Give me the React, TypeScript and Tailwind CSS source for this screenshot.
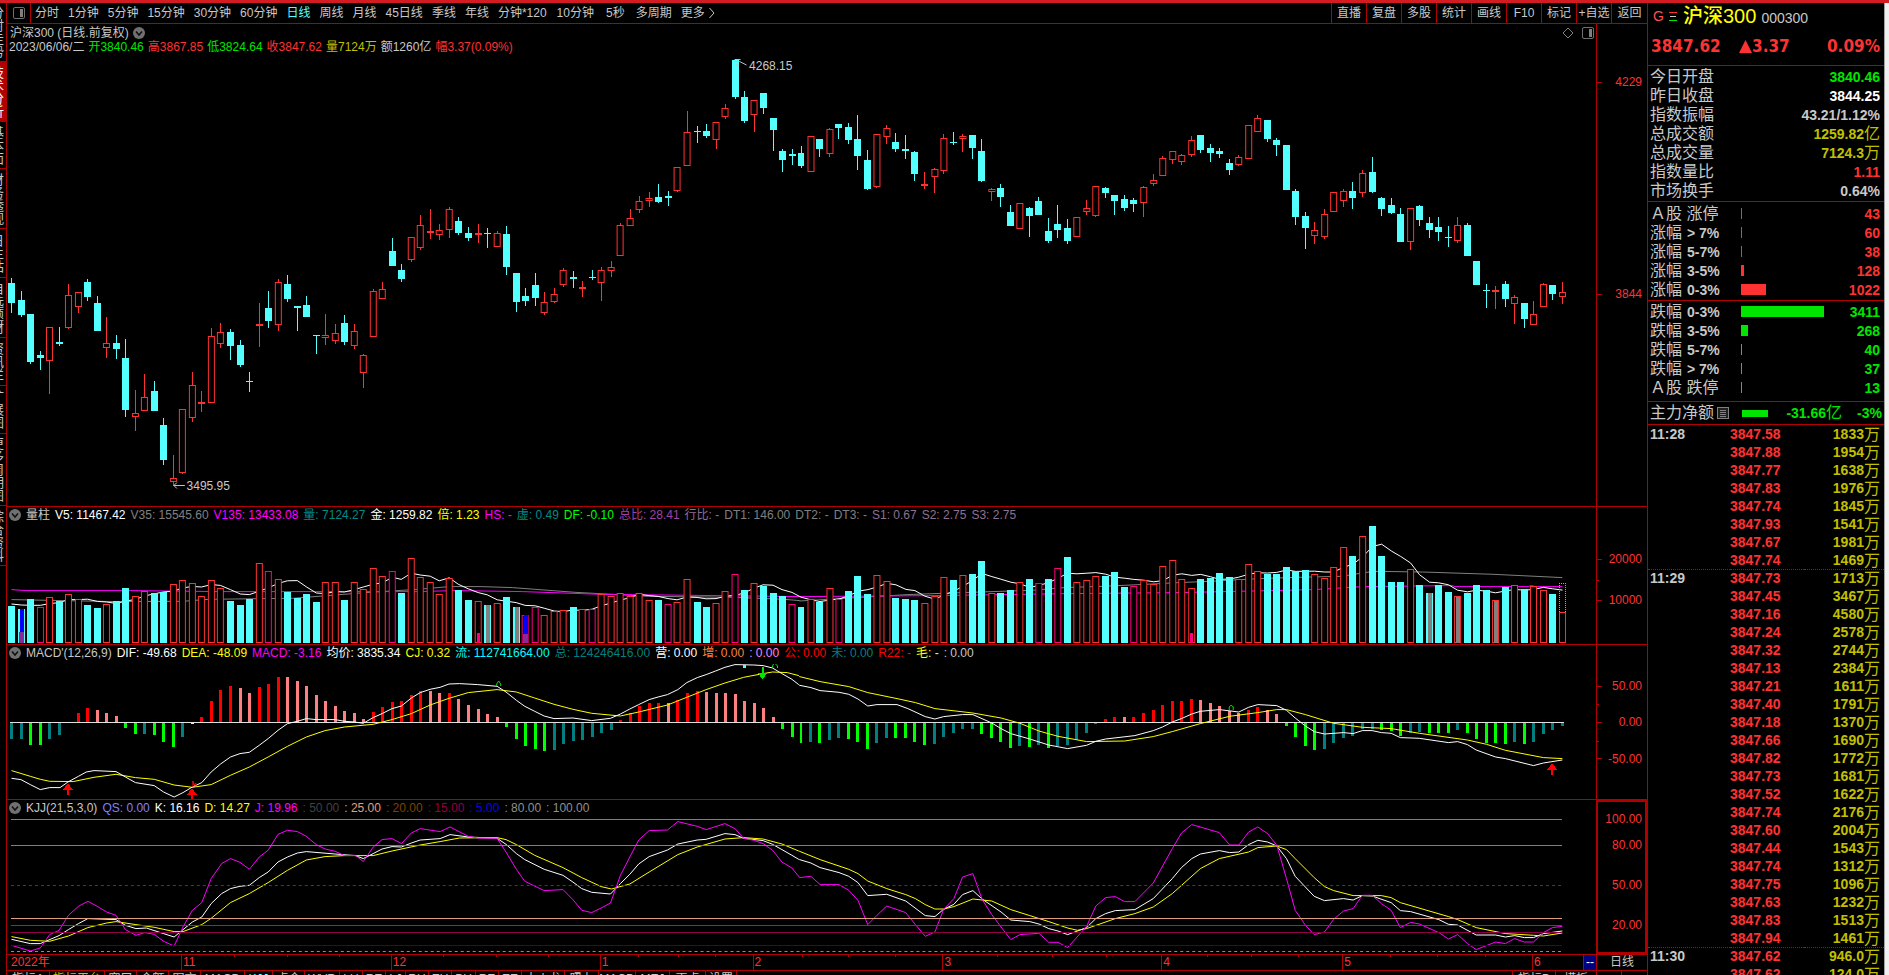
import React from "react";

const SANS = "font-['Liberation_Sans','Noto_Sans_CJK_SC',sans-serif]";
const BIG = "font-['DejaVu_Sans_Condensed','DejaVu_Sans','Noto_Sans_CJK_SC',sans-serif]";

const UP = "#ff3232";
const DOWN = "#54ffff";

const barX = (i: number) => Math.round(8 + 9.521 * i);

/* ---------- price data: direction, high, body top, body bottom, low ---------- */

type Candle = { up: boolean; hi: number; top: number; bot: number; lo: number };

const parseCandles = (text: string, base: number): Candle[] =>
  text
    .trim()
    .split(/\s+/)
    .map((item) => {
      const [hi, top, bot, lo] = item.slice(1).split(",").map((v) => Math.round(base + Number(v) / 3));
      return { up: item[0] === "u", hi, top, bot, lo };
    });

const candles: Candle[] = [
  ...parseCandles(
    `d714,729,789,819 d753,780,825,831 d822,822,966,972 d933,945,954,990 u861,861,963,1062 d861,906,912,918
     u732,765,864,867 u756,756,801,819 d717,726,771,783 d768,789,873,873 u831,909,924,954 d885,909,927,957
     d897,954,1110,1131 u1050,1119,1131,1173 u1002,1071,1113,1113 d1023,1053,1113,1113 d1134,1155,1260,1275
     u1245,1314,1326,1338 u1107,1107,1299,1302 u996,1035,1134,1146 u1053,1086,1092,1116 u864,888,1089,1089
     u849,876,912,924 d867,876,918,960 d900,915,975,981 d996,1023,1026,1056 u789,852,858,921 d753,804,843,864
     u717,726,855,873 d705,732,777,786 d798,798,804,873 d768,795,831,831 d885,885,888,942 u822,885,894,915
     u852,879,903,912 d825,849,906,915 u852,873,918,927 u942,945,999,1044 u747,753,891,891 u726,747,777,777
     d594,633,678,678 d672,690,717,726 u591,591,660,666 u525,555,624,630 u507,573,579,597 u552,570,585,600
     u501,507,570,594 d531,543,579,585 d561,579,594,603 u552,579,585,609
     d564,579,582,624 u573,579,621,621 d558,582,681,705 d699,699,786,816 d744,768,783,798 d699,735,774,798
     u756,786,819,825 u744,762,786,789 u684,690,735,741 d693,711,717,744 u723,741,747,771 d690,711,714,720
     u681,690,729,783 u663,681,693,711 u549,555,648,648 u507,534,558,558 u468,483,510,519 u456,474,483,501
     d432,471,486,489 d453,468,474,498 u381,381,453,456 u213,276,378,378 d258,273,276,309 d252,273,288,294
     u246,246,300,327 u192,204,231,237 d57,60,171,177 d153,171,243,249 u180,180,225,276 d159,159,204,222
     d234,234,270,333 d327,333,360,396 d327,342,348,375 d318,339,378,384 u288,288,396,396 d297,297,327,351
     u264,267,342,351 d252,252,264,297 d249,261,300,312 d225,297,348,390 d330,360,447,450 u282,282,441,444
     u255,264,291,312 d279,306,327,336 d285,327,333,357 d333,336,402,423 u396,432,438,447 u384,387,411,459
     u282,294,393,402 d276,306,309,315 u282,288,297,336 d285,285,324,357 d297,333,423,426 u444,447,456,483
     d432,444,471,501 d495,516,558,558 u489,489,567,567 d501,504,528,591 d471,483,525,525`,
    40
  ),
  ...parseCandles(
    `d384,423,453,459 d345,402,420,444 d387,414,453,462 u381,381,441,441 u330,354,366,375 u288,288,378,381
     d291,294,309,324 d315,315,333,375 d315,327,354,363 d324,330,342,366 u288,291,339,381 u252,270,282,288
     u198,204,258,258 u183,183,210,222 u192,195,216,225 u138,150,195,201 d135,135,180,189 d162,174,189,216
     d174,183,192,204 d207,219,240,255 u195,201,225,228 u105,105,207,207 u75,84,126,126 d90,90,147,156
     d144,150,165,198 d165,165,300,300 d297,303,381,405 d366,378,414,477 u396,420,438,462 u357,372,441,447
     u306,306,366,366 u297,303,333,351 d276,303,324,357 u240,249,309,321 d201,246,306,309 d321,324,357,378
     d324,345,369,372 d354,372,456,456 u354,354,456,480 d345,348,390,408 d381,399,420,444 d381,411,426,453
     d408,441,444,471 u381,405,453,459 d399,405,498,498 d513,513,585,585 d582,600,603,654 u588,600,606,657
     d573,582,627,651 u615,621,642,702 d639,639,687,714 u633,672,705,705 u579,582,651,651 d585,585,612,630
     u576,606,621,642`,
    90
  ),
];

/* ---------- volume: u hollow red, d cyan, m hollow pink, g/h grey core, b blue mark ---------- */

const volumeItems = `d333 b342 d312 m336 u306 d318 u297 u312 d330 d339 u327 d318 d279 u303 u288 d294 d291 u267 u255 u264
  u303 u255 u279 d318 d330 d312 u204 m228 u252 d291 d309 d297 d321 u261 u261 d315 u261 u282 u219 u243 m228 d294 u189
  u246 u261 u297 u249 d285 d315 p318 g330 u324 d306 g336 c360 m336 u360 u348 u345 d336 u342 m342 u297 u303 u294 u303
  u294 u315 d315 m327 u321 u252 d321 d336 u324 u288 m237 d285 u264 d273 d294 d303 m327 d336 u312 d321 u279 m312 d288
  d243 d297 u240 u258 d309 d312 d315 u324 u303 u246 d255 u240 d237 d198 u294 d294 d285 u261 d252 m264 d252 m219 d186
  u261 u255 u243 d243 d231 d276 m273 u255 u267 u213 u195 u252 p279 d252 d249 d234 d246 u252 u207 u228 d237 d237 d216
  d228 d225 u237 u249 u216 u156 d183 u123 d93 d183 d261 d261 u222 d270 g294 d270 d291 h303 d294 d270 d285 h315 d276
  u270 d282 u273 u285 d297 e351`
  .trim()
  .split(/\s+/)
  .map((s) => ({ kind: s[0], v: Number(s.slice(1)) }));

/* ---------- MACD histogram ---------- */

const macdItems = `T732 T732 G750 G750 T732 T720 N682 R654 R639 P645 P654 P663 G699 G717 T717 G720 G741 G756 T726 Y687 R666
  R618 R585 R573 P579 P594 R576 R567 R546 P546 P558 P573 P600 P618 P633 P648 P654 P672 R651 R636 R621 R618 R600 R588
  P588 P594 R594 P612 P630 P642 P657 P666 G696 G732 G753 G762 G768 T765 T747 T738 T735 T726 T714 T705 R675 R654 R633
  R624 R624 P624 R615 R594 R588 P591 P594 P594 P597 P618 P624 P639 P666 G702 G726 G744 T741 G744 T735 T729 G732 G741
  G762 T744 T729 G729 G729 G741 G750 T747 T726 T714 T702 T702 G717 G729 G741 G759 T753 G756 T750 G759 T753 T750 T735
  T714 T687 R672 R666 P666 R666 R654 R645 R630 R618 R618 R612 P615 P624 P633 P648 P654 R645 R636 P645 P657 G693 G726
  G753 G765 T762 T744 T729 T723 T702 T702 G705 G708 G723 T714 T711 G714 G714 G714 T705 G714 G732 G744 G744 G747 T741
  G747 T741 T717 T705 T693`
  .trim()
  .split(/\s+/)
  .map((s) => ({ kind: s[0], v: Number(s.slice(1)) }));

const macdColor: Record<string, string> = {
  T: "#008080",
  G: "#00ff00",
  R: "#ff0000",
  P: "#ff8080",
  Y: "#ffff00",
};

/* ---------- indicator curves, sampled in two halves ---------- */

const half = (text: string, x0: number, sx: number, y0: number) =>
  text
    .trim()
    .split(/\s+/)
    .map((p) => {
      const [x, y] = p.split(",").map(Number);
      return `${(x0 + x / sx).toFixed(1)},${(y0 + y / 3 + 0.3).toFixed(1)}`;
    })
    .join(" ");

const curve = (left: string, right: string, y0: number) =>
  `${half(left, 0, 1.912, y0)} ${half(right, 800, 1.8447, y0)}`;

const v135 = curve(
  "22,283 50,286 250,286 420,289 800,289 870,286 1000,289 1150,297 1320,300 1530,304",
  "0,304 250,301 500,295 700,292 870,286 950,283 1040,274 1205,271 1210,274 1345,274 1350,271 1360,274 1408,274",
  495
);
const v35 = curve(
  "22,313 220,319 350,318 400,312 560,309 700,292 800,282 860,274 920,274 980,277 1100,291 1240,303 1400,306 1500,312 1530,316",
  "0,317 200,298 300,292 430,285 490,277 560,273 640,267 700,262 760,258 850,250 920,246 1000,243 1060,228 1150,230 1280,237 1408,247",
  495
);
const v5 = volumeItems
  .map((_, i) => {
    const from = Math.max(0, i - 4);
    const part = volumeItems.slice(from, i + 1);
    const avg = i < 4 ? [327, 330, 331, 331][i] : part.reduce((a, b) => a + (b.kind === "e" ? 290 : b.v), 0) / part.length;
    return `${barX(i) + 3.5},${(495 + avg / 3).toFixed(1)}`;
  })
  .join(" ");

const dif = curve(
  `22,849 40,853 58,868 77,883 95,877 115,877 130,860 150,843 165,830 180,826 222,829 240,845 259,862 295,871 313,890
   333,905 350,892 368,875 386,862 404,830 422,806 441,785 459,775 477,771 496,750 513,730 532,705 550,685 569,678
   586,670 605,673 641,673 659,678 678,680 695,684 714,667 731,655 750,640 768,632 787,608 804,592 823,582 842,576
   859,566 879,565 914,568 951,573 968,590 988,615 1004,633 1023,648 1041,662 1060,670 1096,668 1132,676 1168,669
   1187,656 1205,641 1222,628 1242,613 1259,605 1277,598 1297,583 1314,562 1334,547 1351,538 1369,527 1387,516
   1406,508 1442,509 1460,511 1478,518 1496,535 1515,552 1528,568`,
  `0,570 21,577 38,586 73,591 91,597 108,611 126,632 143,628 180,628 200,640 232,664 250,671 266,664 301,658 320,658
   355,683 372,700 390,715 425,731 460,749 495,760 530,750 547,738 565,731 619,721 653,706 670,695 688,680 705,670
   724,656 740,648 775,643 811,650 829,636 846,628 881,631 899,645 915,668 934,692 950,709 969,716 1004,712 1022,715
   1039,706 1057,706 1074,712 1092,714 1109,727 1144,729 1198,742 1215,739 1233,748 1249,764 1285,785 1303,790
   1355,811 1373,803 1408,794`,
  495
);
const dea = curve(
  `22,826 58,843 77,852 95,858 140,859 180,846 222,837 259,847 295,852 333,869 368,876 404,868 441,840 477,815 513,785
   550,753 586,725 622,706 659,695 714,687 750,673 787,655 823,629 859,609 896,592 951,583 988,590 1023,608 1060,627
   1096,642 1132,654 1187,662 1222,650 1277,629 1314,606 1351,583 1387,563 1423,546 1460,535 1478,530 1506,532 1528,541`,
  `0,544 38,559 91,574 126,592 180,610 214,622 250,640 320,653 372,668 407,684 442,707 477,723 530,739 600,737 653,724
   688,709 740,685 794,663 846,652 881,643 899,643 934,658 986,684 1039,696 1092,700 1144,714 1233,734 1268,747
   1303,765 1373,787 1408,790`,
  495
);
const kLine = curve(
  `22,432 58,445 77,445 113,421 131,403 150,385 168,370 222,373 240,390 260,400 280,398 313,415 333,425 368,380 386,365
   404,325 424,295 441,280 459,273 477,270 496,247 513,230 532,200 550,185 569,173 586,169 641,176 680,181 695,190
   714,175 731,161 750,154 768,155 787,143 804,134 842,130 861,118 896,125 951,129 968,147 988,175 1004,193 1041,222
   1077,240 1096,260 1113,280 1132,291 1168,296 1187,265 1205,237 1222,206 1242,184 1277,164 1297,146 1334,134
   1351,132 1387,115 1406,118 1423,129 1460,136 1478,147 1496,163 1515,180 1528,192`,
  `0,193 21,203 38,217 73,232 91,243 108,262 126,301 161,297 196,317 232,361 250,364 266,342 285,327 301,298 320,286
   337,311 372,350 390,374 425,379 442,386 460,400 477,407 495,418 530,397 547,370 565,355 583,346 619,343 653,310
   688,250 705,217 724,190 740,176 775,166 794,172 811,170 829,148 846,135 864,140 881,152 899,190 915,243 950,303
   969,316 1004,310 1022,314 1039,301 1057,302 1092,322 1109,346 1128,349 1180,373 1198,387 1215,389 1249,419
   1285,419 1303,425 1320,421 1338,427 1355,427 1373,415 1408,407`,
  795
);
const dLine = curve(
  `22,424 58,435 95,438 131,422 168,397 204,383 222,379 260,388 295,396 333,409 350,409 386,388 404,369 441,322 477,295
   513,262 550,225 586,194 622,184 659,181 714,181 750,167 804,149 842,139 879,128 951,127 968,133 988,148 1023,180
   1077,217 1113,247 1150,274 1170,281 1205,266 1242,230 1297,178 1334,155 1387,131 1423,127 1460,131 1496,146
   1528,167`,
  `0,168 38,193 91,222 108,235 126,257 161,280 196,298 214,310 232,328 250,341 266,341 285,334 320,311 355,317 390,343
   425,361 460,379 495,398 513,405 530,400 583,370 619,355 653,335 688,295 740,220 775,190 829,170 846,157 881,152
   899,163 915,190 950,247 969,274 986,286 1022,301 1074,301 1092,307 1109,322 1198,364 1215,373 1249,397 1303,415
   1355,420 1373,422 1408,413`,
  795
);
const jLine = curve(
  `22,450 58,467 77,458 95,418 113,405 131,360 150,333 168,318 186,333 204,350 222,360 240,403 260,420 277,412 295,417
   313,438 333,452 350,395 368,345 386,322 404,250 424,205 441,190 459,201 477,222 496,185 513,165 532,117 550,105
   569,109 586,123 605,148 622,161 641,168 659,181 680,180 695,199 714,155 731,133 750,130 768,145 787,113 804,100
   842,109 861,95 896,123 914,128 951,129 968,170 988,222 1004,258 1041,286 1077,283 1096,313 1113,345 1132,352
   1150,338 1168,323 1187,240 1205,185 1222,134 1242,106 1277,104 1297,79 1334,93 1351,103 1387,85 1406,100 1423,129
   1442,135 1460,145 1478,165 1496,200 1515,218 1528,243`,
  `0,247 21,243 38,268 73,268 91,285 108,315 126,388 143,360 161,332 196,352 214,388 232,423 250,410 266,342 285,310
   301,245 320,235 337,312 355,358 372,395 390,433 407,418 442,414 460,441 477,441 495,457 530,393 547,332 565,307
   583,304 600,319 619,319 653,263 688,160 705,113 724,88 740,95 775,112 794,149 811,149 829,110 846,95 864,115
   881,150 899,250 915,345 934,390 950,418 969,410 986,372 1004,347 1022,340 1039,300 1057,300 1074,325 1092,345
   1109,397 1128,381 1144,386 1180,412 1198,431 1215,418 1233,445 1249,463 1285,440 1303,445 1320,430 1338,440
   1355,440 1373,412 1390,397 1408,393`,
  795
);

/* ---------- small drawings ---------- */

const ChevronDot = () => (
  <svg className="size-3 shrink-0" viewBox="0 0 12 12" aria-hidden="true">
    <circle cx="6" cy="6" r="6" fill="#707070" />
    <path d="M3 4.5 6 8l3-3.5" fill="none" stroke="#101010" strokeWidth="1.5" />
  </svg>
);

const PanelIcon = () => (
  <svg className="size-3 shrink-0" viewBox="0 0 12 12" aria-hidden="true">
    <rect x="0.5" y="0.5" width="11" height="11" rx="1.5" fill="none" stroke="#707070" />
    <rect x="7" y="2" width="3" height="8" fill="#808080" />
  </svg>
);

const Arrow = ({ x, y, down }: { x: number; y: number; down?: boolean }) => (
  <path
    fill={down ? "#00e600" : "#ff0000"}
    d={
      down
        ? `M${x - 1} ${y - 12}h2v6h4l-5 6l-5 -6h4z`
        : `M${x} ${y}l5 7h-4v5h-2v-5h-4z`
    }
  />
);

const Frame = ({ box, label, children }: { box: string; label: string; children: React.ReactNode }) => (
  <svg
    className="absolute inset-0 size-full"
    viewBox={box}
    preserveAspectRatio="none"
    shapeRendering="crispEdges"
    role="img"
    aria-label={label}
  >
    {children}
  </svg>
);

/* ---------- chart panes ---------- */

const PriceChart = () => (
  <Frame box="7 54 1590 452" label="沪深300 日线">
    {candles.map((c, i) => {
      const x = barX(i);
      const color = c.up ? UP : DOWN;
      const h = Math.max(1, c.bot - c.top);
      return (
        <g key={i} fill={color}>
          {c.top > c.hi && <rect x={x + 3} y={c.hi} width="1" height={c.top - c.hi} />}
          {c.lo > c.bot && <rect x={x + 3} y={c.bot} width="1" height={c.lo - c.bot} />}
          {c.up && h > 2 ? (
            <rect x={x + 0.5} y={c.top + 0.5} width="6" height={h - 1} fill="none" stroke={color} />
          ) : (
            <rect x={x} y={c.top} width="7" height={h} />
          )}
        </g>
      );
    })}
    <g stroke="#c0c0c0" fill="none">
      <path d="M735 61.500h5l7 3.500M735 59.500h6M737 64l2 3" />
      <path d="M174 485.500h11M174 485.500l3 -3M174 485.500l3 3" />
    </g>
  </Frame>
);

const VOL_BASE = 643;

const VolumeChart = () => (
  <Frame box="7 523 1590 121" label="成交量">
    <polyline points={v35} fill="none" stroke="#808080" />
    <polyline points={v135} fill="none" stroke="#ff00ff" />
    <polyline points={v5} fill="none" stroke="#ffffff" />
    {volumeItems.map(({ kind, v }, i) => {
      const x = barX(i);
      const y = Math.round(495 + v / 3);
      const h = VOL_BASE - y;
      if (kind === "d") return <rect key={i} x={x} y={y} width="7" height={h} fill={DOWN} />;
      if (kind === "g")
        return (
          <g key={i}>
            <rect x={x} y={y} width="7" height={h} fill={DOWN} />
            <rect x={x + 2} y={y} width="4" height={h} fill="#808080" />
          </g>
        );
      if (kind === "b")
        return (
          <g key={i}>
            <rect x={x} y={y} width="7" height={h} fill={DOWN} />
            <rect x={x + 2} y={y} width="4" height={h} fill="#0000ff" />
            <rect x={x + 1} y="632" width="5" height="11" fill="#8a2a9a" />
          </g>
        );
      return (
        <g key={i}>
          <rect
            x={x + 0.5}
            y={y + 0.5}
            width="6"
            height={h - 1}
            fill="#000000"
            stroke={kind === "m" || kind === "c" ? "#ff0080" : UP}
          />
          {kind === "h" && <rect x={x + 2} y={y + 1} width="4" height={h - 1} fill="#808080" />}
          {kind === "p" && <rect x={x + 2} y="633" width="3" height="10" fill="#ff0080" />}
          {kind === "c" && (
            <>
              <rect x={x + 2} y={y} width="4" height={h} fill="#0000ff" />
              <rect x={x + 1} y="634" width="5" height="9" fill="#8a2a9a" />
            </>
          )}
          {kind === "e" && (
            <path
              d={`M${x + 0.5} 583v29M${x + 6.5} 583v29M${x} 583.5h7`}
              stroke="#c0c000"
              strokeDasharray="1 1"
              fill="none"
            />
          )}
        </g>
      );
    })}
  </Frame>
);

const MacdChart = () => (
  <Frame box="7 661 1590 138" label="MACD">
    {macdItems.map(({ kind, v }, i) => {
      if (kind === "N") return null;
      const y = Math.round(495 + v / 3);
      const top = Math.min(y, 722);
      return (
        <rect key={i} x={barX(i) + 2} y={top} width="3" height={Math.max(1, Math.abs(y - 722))} fill={macdColor[kind]} />
      );
    })}
    <rect x="10" y="722" width="1555" height="1" fill="#e0e0e0" />
    <polyline points={dea} fill="none" stroke="#ffff00" />
    <polyline points={dif} fill="none" stroke="#ffffff" />
    <Arrow x={68} y={783} />
    <Arrow x={192} y={788} />
    <Arrow x={1553} y={763} />
    <Arrow x={763} y={679} down />
    <g fill="none" stroke="#00e600">
      <path d="M497 686v-2l2 -3l2 3v2" />
      <path d="M773 668v-2l1 -2M776 664l2 2v2" />
      <path d="M1230 710v-3l2 -2l2 2v3" />
    </g>
    <path d="M193 787v-6l1 4l2 -2v3" fill="none" stroke="#ff0000" />
    <rect x="743" y="665" width="3" height="3" fill={DOWN} />
  </Frame>
);

const kjjLevels = [
  { y: 819, color: "#808080" },
  { y: 845, color: "#808080" },
  { y: 885, color: "#404040", dash: "3 3" },
  { y: 918, color: "#e0a080" },
  { y: 925, color: "#804000" },
  { y: 932, color: "#900048" },
  { y: 945, color: "#0000ff" },
  { y: 951, color: "#8080ff", dash: "3 3" },
];

const KjjChart = () => (
  <Frame box="7 816 1590 138" label="KJJ">
    <polyline points={kLine} fill="none" stroke="#ffffff" />
    <polyline points={dLine} fill="none" stroke="#ffff00" />
    <polyline points={jLine} fill="none" stroke="#ff00ff" />
    {kjjLevels.map((l) => (
      <line key={l.y} x1="11" x2="1563" y1={l.y + 0.5} y2={l.y + 0.5} stroke={l.color} strokeDasharray={l.dash} />
    ))}
  </Frame>
);

/* ---------- pane header ---------- */

type Field = [string, string];

const Readout = ({ title, fields }: { title: string; fields: Field[] }) => (
  <header className="flex h-4 shrink-0 items-center gap-[5px] pl-[2px] text-[12px] leading-4 whitespace-nowrap">
    <button type="button" aria-label={`${title} 菜单`}>
      <ChevronDot />
    </button>
    <h2 className="text-[#c8c8c8]">{title}</h2>
    {fields.map(([text, color], i) => (
      <span key={i} className={color}>
        {text}
      </span>
    ))}
  </header>
);

const volumeFields: Field[] = [
  ["V5: 11467.42", "text-white"],
  ["V35: 15545.60", "text-[#808080]"],
  ["V135: 13433.08", "text-[#ff00ff]"],
  ["量: 7124.27", "text-[#008a8a]"],
  ["金: 1259.82", "text-white"],
  ["倍: 1.23", "text-[#ffff00]"],
  ["HS: -", "text-[#ff00ff]"],
  ["虚: 0.49", "text-[#008a8a]"],
  ["DF: -0.10", "text-[#00ff00]"],
  ["总比: 28.41", "text-[#a040a8]"],
  ["行比: -", "text-[#907090]"],
  ["DT1: 146.00", "text-[#808080]"],
  ["DT2: -", "text-[#808080]"],
  ["DT3: -", "text-[#808080]"],
  ["S1: 0.67", "text-[#907090]"],
  ["S2: 2.75", "text-[#907090]"],
  ["S3: 2.75", "text-[#907090]"],
];

const macdFields: Field[] = [
  ["DIF: -49.68", "text-white"],
  ["DEA: -48.09", "text-[#ffff00]"],
  ["MACD: -3.16", "text-[#ff00ff]"],
  ["均价: 3835.34", "text-white"],
  ["CJ: 0.32", "text-[#ffff00]"],
  ["流: 112741664.00", "text-[#00ffff]"],
  ["总: 124246416.00", "text-[#008080]"],
  ["营: 0.00", "text-white"],
  ["增: 0.00", "text-[#ff8040]"],
  [": 0.00", "text-[#ff80ff]"],
  ["公: 0.00", "text-[#ff0000]"],
  ["未: 0.00", "text-[#008080]"],
  ["R22: -", "text-[#ff0000]"],
  ["毛: -", "text-[#ffff00]"],
  [": 0.00", "text-[#c8c8c8]"],
];

const kjjFields: Field[] = [
  ["QS: 0.00", "text-[#8080ff]"],
  ["K: 16.16", "text-white"],
  ["D: 14.27", "text-[#ffff00]"],
  ["J: 19.96", "text-[#ff00ff]"],
  [": 50.00", "text-[#404040]"],
  [": 25.00", "text-[#e0a080]"],
  [": 20.00", "text-[#804000]"],
  [": 15.00", "text-[#900048]"],
  [": 5.00", "text-[#0000ff]"],
  [": 80.00", "text-[#909090]"],
  [": 100.00", "text-[#909090]"],
];

/* ---------- value axis ---------- */

type Mark = { at: number; text?: string };

const ValueAxis = ({ from, to, marks, boxed }: { from: number; to: number; marks: Mark[]; boxed?: boolean }) => (
  <div
    className={
      boxed
        ? "relative w-[52px] shrink-0 border-2 border-r-[3px] border-[#b00000]"
        : "relative w-[52px] shrink-0 border-x border-[#b00000]"
    }
  >
    {marks.map((m) => (
      <div
        key={m.at}
        className={`absolute inset-x-0 flex h-4 -translate-y-1/2 items-center justify-between ${boxed ? "pr-[3px]" : "pr-[5px]"}`}
        style={{ top: `${((m.at - from) / (to - from)) * 100}%` }}
      >
        <span className={boxed ? "w-0" : m.text ? "h-px w-[5px] bg-[#b00000]" : "h-px w-[2px] bg-[#b00000]"} />
        <span className="text-[12px] leading-4 text-[#ff3232]">{m.text}</span>
      </div>
    ))}
  </div>
);

/* ---------- time axis ---------- */

const months: [number, string][] = [
  [181, "11"],
  [391, "12"],
  [600, "1"],
  [753, "2"],
  [943, "3"],
  [1162, "4"],
  [1343, "5"],
  [1533, "6"],
];
const weekTicks = [234, 287, 339, 443, 496, 548, 638, 678, 715, 802, 849, 896, 998, 1053, 1107, 1208, 1252, 1299, 1391, 1438, 1486];
const pctX = (x: number) => `${((x - 7) / 1590) * 100}%`;

const TimeAxis = () => (
  <footer className="flex h-4 shrink-0 border-b border-[#b00000] text-[12px] leading-[15px]">
    <div className="relative min-w-0 flex-1 text-[#ff3232]">
      <span className="pl-1">2022年</span>
      {weekTicks.map((x) => (
        <span key={x} className="absolute top-0 h-[2px] w-px bg-[#b00000]" style={{ left: pctX(x) }} />
      ))}
      {months.map(([x, t]) => (
        <span
          key={x}
          className="absolute inset-y-0 border-l border-[#b00000] pl-px"
          style={{ left: pctX(x) }}
        >
          {t}
        </span>
      ))}
      <span className="absolute inset-y-0 right-0 w-[13px] border-l border-[#b00000] bg-[#000080] text-center text-white">
        --
      </span>
    </div>
    <button type="button" className="w-[52px] shrink-0 border-x border-[#b00000] text-center text-[#c8c8c8]">
      日线
    </button>
  </footer>
);

/* ---------- bars around the charts ---------- */

const periods: [string, string][] = [
  ["分时", ""], ["1分钟", ""], ["5分钟", ""], ["15分钟", ""], ["30分钟", ""], ["60分钟", ""],
  ["日线", "text-[#54ffff]"], ["周线", ""], ["月线", ""], ["45日线", ""], ["季线", ""], ["年线", ""],
  ["分钟*120", ""], ["10分钟", "px-px"], ["5秒", "px-[2px]"], ["多周期", ""],
];
const tools = ["直播", "复盘", "多股", "统计", "画线", "F10", "标记", "+自选"];

const Toolbar = () => (
  <nav className="flex h-[21px] shrink-0 items-stretch border-r border-b border-[#b00000] text-[12px] text-[#c8c8c8]">
    <button type="button" aria-label="侧栏" className="flex w-[24px] items-center justify-center border-r border-[#b00000]">
      <PanelIcon />
    </button>
    <div className="flex flex-1 items-center gap-[9px] pl-1 whitespace-nowrap">
      {periods.map(([p, cls]) => (
        <button type="button" key={p} className={cls}>
          {p}
        </button>
      ))}
      <button type="button" className="flex items-center gap-1">
        更多
        <svg className="h-3 w-[6px]" viewBox="0 0 6 12" aria-hidden="true">
          <path d="M0.500 1 5 6 0.500 11" fill="none" stroke="#c8c8c8" />
        </svg>
      </button>
    </div>
    {tools.map((t) => (
      <button type="button" key={t} className="w-[35px] border-l border-[#b00000] text-center whitespace-nowrap">
        {t}
      </button>
    ))}
    <button type="button" className="w-[36px] border-l border-[#b00000] text-center">
      返回
    </button>
  </nav>
);

const sideTabs: [string, string][] = [
  ["分时走势", "h-[58px] text-[#c8c8c8]"],
  ["技术分析", "h-[61px] bg-[#b00000] text-white"],
  ["基本面", "h-[47px] border-b border-[#b00000] text-[#c8c8c8]"],
  ["财务透视", "h-[60px] border-b border-[#b00000] text-[#c8c8c8]"],
  ["日主站", "h-[49px] border-b border-[#b00000] text-[#c8c8c8]"],
  ["自选题材", "h-[60px] border-b border-[#b00000] text-[#c8c8c8]"],
  ["资讯栏", "h-[48px] border-b border-[#b00000] text-[#c8c8c8]"],
  ["扩展图", "h-[48px] border-b border-[#b00000] text-[#c8c8c8]"],
  ["更多周期图", "h-[72px] border-b border-[#b00000] text-[#c8c8c8]"],
  ["综合资料", "h-[60px] border-b border-[#b00000] text-[#c8c8c8]"],
];

const SideTabs = () => (
  <nav className="flex w-[7px] shrink-0 flex-col border-r border-[#b00000]">
    {sideTabs.map(([t, cls]) => (
      <button
        type="button"
        key={t}
        className={`shrink-0 overflow-hidden pr-[3px] text-[13px] leading-[14px] whitespace-nowrap [writing-mode:vertical-rl] ${cls}`}
      >
        {t}
      </button>
    ))}
  </nav>
);

const templates: [string, string][] = [
  ["指标A", "w-[43px]"], ["指标平台", "w-[55px] text-[#c0c000]"], ["窗口", "w-[32px]"], ["金额", "w-[32px]"],
  ["图文", "w-[32px]"], ["MACD", "w-[44px]"], ["KJJ", "w-[28px] text-[#54ffff]"], ["点金", "w-[32px]"],
  ["WVR", "w-[35px]"], ["LU", "w-[23px]"], ["RE", "w-[23px]"], ["LJ", "w-[20px]"], ["RU", "w-[23px]"],
  ["EU", "w-[23px]"], ["BU", "w-[24px]"], ["RE", "w-[23px]"], ["EE", "w-[23px]"], ["大火龙", "w-[43px]"],
  ["照力", "w-[34px]"], ["MACD", "w-[37px]"], ["MEJ", "w-[34px]"], ["更点", "w-[36px]"], ["设置", "w-[31px]"],
];

const TemplateBar = () => (
  <nav className="flex h-1 shrink-0 overflow-hidden text-[12px] leading-4 text-[#c8c8c8]">
    {templates.map(([t, cls], i) => (
      <button
        type="button"
        key={i}
        className={`h-4 shrink-0 overflow-hidden border-r border-[#b00000] text-center whitespace-nowrap ${cls}`}
      >
        {t}
      </button>
    ))}
    <span className="flex-1" />
    <button type="button" className="h-4 w-[43px] border-l border-[#b00000]">指标B</button>
    <button type="button" className="h-4 w-[41px] border-l border-[#b00000]">模板</button>
    <button type="button" className="h-4 w-[25px] border-l border-[#b00000]">+</button>
    <button type="button" className="h-4 w-[27px] border-x border-[#b00000]">-</button>
  </nav>
);

/* ---------- quote panel ---------- */

const RED = "text-[#ff3232]";
const GREEN = "text-[#00e600]";
const YELLOW = "text-[#c0c000]";
const GREY = "text-[#c8c8c8]";

const stats: [string, string, string, string][] = [
  ["今日开盘", "3840.46", "", GREEN],
  ["昨日收盘", "3844.25", "", "text-white"],
  ["指数振幅", "43.21/1.12%", "", GREY],
  ["总成交额", "1259.82", "亿", YELLOW],
  ["总成交量", "7124.3", "万", YELLOW],
  ["指数量比", "1.11", "", RED],
  ["市场换手", "0.64%", "", GREY],
];

const rising: [string, string, number][] = [
  ["Ａ股 涨停", "", 43],
  ["涨幅", "> 7%", 60],
  ["涨幅", "5-7%", 38],
  ["涨幅", "3-5%", 128],
  ["涨幅", "0-3%", 1022],
];
const falling: [string, string, number][] = [
  ["跌幅", "0-3%", 3411],
  ["跌幅", "3-5%", 268],
  ["跌幅", "5-7%", 40],
  ["跌幅", "> 7%", 37],
  ["Ａ股 跌停", "", 13],
];

const CJK = "text-[16px] font-normal";

type BreadthProps = { rows: [string, string, number][]; text: string; fill: string; pad: string };

const Breadth = ({ rows, text, fill, pad }: BreadthProps) => (
  <dl className={`border-b border-[#b00000] pl-[2px] ${pad}`}>
    {rows.map(([label, range, count]) => (
      <div key={label + range} className="flex h-[19px] items-center pr-1">
        <dt className={`flex w-[91px] shrink-0 items-center gap-[5px] whitespace-nowrap ${GREY}`}>
          <span className={CJK}>{label}</span>
          {range && <span className="font-bold">{range}</span>}
        </dt>
        <dd className="flex flex-1 items-center justify-between">
          <span className={`h-[11px] ${fill}`} style={{ width: Math.max(1, Math.round((count / 3411) * 83)) }} />
          <span className={`font-bold ${text}`}>{count}</span>
        </dd>
      </div>
    ))}
  </dl>
);

const trades: [string, string, string][] = [
  ["11:28", "58", "1833"], ["", "88", "1954"], ["", "77", "1638"], ["", "83", "1976"], ["", "74", "1845"],
  ["", "93", "1541"], ["", "67", "1981"], ["", "74", "1469"],
  ["11:29", "73", "1713"], ["", "45", "3467"], ["", "16", "4580"], ["", "24", "2578"], ["", "32", "2744"],
  ["", "13", "2384"], ["", "21", "1611"], ["", "40", "1791"], ["", "18", "1370"], ["", "66", "1690"],
  ["", "82", "1772"], ["", "73", "1681"], ["", "52", "1622"], ["", "74", "2176"], ["", "60", "2004"],
  ["", "44", "1543"], ["", "74", "1312"], ["", "75", "1096"], ["", "63", "1232"], ["", "83", "1513"],
  ["", "94", "1461"],
  ["11:30", "62", "946.0"], ["", "62", "124.0"],
];

const QuotePanel = () => (
  <aside className="flex w-[236px] shrink-0 flex-col overflow-hidden text-[14px] leading-[18px]">
    <header className="h-[63px] shrink-0 border-b border-[#b00000] pl-[3px]">
      <div className="flex h-[26px] items-center whitespace-nowrap">
        <span className="w-[18px] pl-[2px] text-[14px] text-[#ff5050]">G</span>
        <svg className="mr-[6px] h-[11px] w-[8px]" viewBox="0 0 8 11" shapeRendering="crispEdges" aria-hidden="true">
          <path d="M0 1.500h8" stroke="#ff3232" />
          <path d="M1 5.500h6" stroke="#c8c8c8" />
          <path d="M0 9.500h8" stroke="#00e600" />
        </svg>
        <h1 className="text-[20px] font-medium text-[#ffff00]">沪深300</h1>
        <span className={`pt-1 pl-[5px] text-[14px] ${GREY}`}>000300</span>
      </div>
      <div className={`flex h-[34px] items-center justify-between pr-1 text-[17px] font-bold ${BIG} ${RED}`}>
        <span className="w-[88px]">3847.62</span>
        <span className="flex flex-1 items-center">
          <svg className="size-[13px]" viewBox="0 0 13 13" aria-hidden="true">
            <path d="M6.500 0 13 13H0z" fill="#ff3232" />
          </svg>
          3.37
        </span>
        <span>0.09%</span>
      </div>
    </header>

    <dl className="shrink-0 border-b border-[#b00000] py-px">
      {stats.map(([label, value, unit, color]) => (
        <div key={label} className="flex h-[19px] items-center justify-between pr-1 pl-[2px]">
          <dt className={`${CJK} ${GREY}`}>{label}</dt>
          <dd className={`flex items-center ${color}`}>
            <span className="font-bold">{value}</span>
            {unit && <span className={CJK}>{unit}</span>}
          </dd>
        </div>
      ))}
    </dl>

    <Breadth rows={rising} text={RED} fill="bg-[#ff3232]" pad="pt-[2px] pb-px" />
    <Breadth rows={falling} text={GREEN} fill="bg-[#00e600]" pad="pt-px pb-1" />

    <div className={`flex h-[23px] shrink-0 items-center border-b border-[#b00000] px-[2px] font-bold ${GREEN}`}>
      <span className={`${CJK} ${GREY}`}>主力净额</span>
      <svg className="ml-[3px] size-3" viewBox="0 0 12 12" shapeRendering="crispEdges" aria-hidden="true">
        <rect x="0.5" y="0.5" width="11" height="11" fill="#202020" stroke="#808080" />
        <path d="M3 3.500h6M3 5.500h6M3 7.500h6M3 9.500h6" stroke="#808080" />
      </svg>
      <span className="ml-[13px] h-[7px] w-[26px] bg-[#00e600]" />
      <span className="flex flex-1 items-center justify-end pr-[15px]">
        -31.66<span className={CJK}>亿</span>
      </span>
      <span>-3%</span>
    </div>

    <div className="min-h-0 flex-1 overflow-hidden">
      <table className="w-full border-separate border-spacing-0 font-bold">
        <tbody>
          {trades.map(([time, price, vol], i) => {
            const line = time && i > 0 ? "border-t border-dotted border-[#d00000]" : "";
            return (
              <tr key={i}>
                <td className={`h-[18px] w-[82px] p-0 pl-[2px] leading-[17px] ${GREY} ${line}`}>{time}</td>
                <td className={`h-[18px] p-0 leading-[17px] ${RED} ${line}`}>3847.{price}</td>
                <td className={`h-[18px] p-0 pr-1 leading-[17px] ${YELLOW} ${line}`}>
                  <div className="flex items-center justify-end">
                    {vol}
                    <span className={CJK}>万</span>
                  </div>
                </td>
              </tr>
            );
          })}
        </tbody>
      </table>
    </div>
  </aside>
);

/* ---------- page ---------- */

export default function App() {
  return (
    <div className={`flex h-screen flex-col overflow-hidden bg-black ${SANS}`}>
      <div className="h-[3px] shrink-0 bg-[#d21c22]" />
      <div className="flex min-h-0 flex-1">
        <SideTabs />
        <main className="flex min-w-0 flex-1 flex-col">
          <Toolbar />

          <section className="flex min-h-0 flex-[482_1_0px] border-b border-[#b00000]">
            <div className="flex min-w-0 flex-1 flex-col text-[12px]">
              <div className="flex h-[17px] shrink-0 items-center gap-1 pr-[2px] pl-[3px] leading-4 text-[#c8c8c8]">
                <h2>沪深300 (日线.前复权)</h2>
                <button type="button" aria-label="菜单">
                  <ChevronDot />
                </button>
                <span className="flex-1" />
                <svg className="mr-1 size-3" viewBox="0 0 12 12" aria-hidden="true">
                  <path d="M6 1 11 6 6 11 1 6z" fill="none" stroke="#808080" />
                </svg>
                <PanelIcon />
              </div>
              <div className="flex h-[13px] shrink-0 items-center gap-1 pl-[2px] leading-[13px] whitespace-nowrap">
                <span className={GREY}>2023/06/06/二</span>
                <span className={GREEN}>开3840.46</span>
                <span className={RED}>高3867.85</span>
                <span className={GREEN}>低3824.64</span>
                <span className={RED}>收3847.62</span>
                <span className={YELLOW}>量7124万</span>
                <span className={GREY}>额1260亿</span>
                <span className={RED}>幅3.37(0.09%)</span>
              </div>
              <div className="relative min-h-0 flex-1">
                <PriceChart />
                <span className="absolute top-[0.8%] left-[46.7%] leading-4 text-[#c8c8c8]">4268.15</span>
                <span className="absolute top-[93.8%] left-[11.3%] leading-4 text-[#c8c8c8]">3495.95</span>
              </div>
            </div>
            <ValueAxis from={24} to={506} marks={[{ at: 82, text: "4229" }, { at: 294, text: "3844" }]} />
          </section>

          <section className="flex min-h-0 flex-[137_1_0px] border-b border-[#b00000]">
            <div className="flex min-w-0 flex-1 flex-col">
              <Readout title="量柱" fields={volumeFields} />
              <div className="relative min-h-0 flex-1">
                <VolumeChart />
              </div>
            </div>
            <ValueAxis
              from={507}
              to={644}
              marks={[{ at: 559, text: "20000" }, { at: 580 }, { at: 600, text: "10000" }]}
            />
          </section>

          <section className="flex min-h-0 flex-[154_1_0px] border-b border-[#b00000]">
            <div className="flex min-w-0 flex-1 flex-col">
              <Readout title="MACD'(12,26,9)" fields={macdFields} />
              <div className="relative min-h-0 flex-1">
                <MacdChart />
              </div>
            </div>
            <ValueAxis
              from={645}
              to={799}
              marks={[
                { at: 686, text: "50.00" },
                { at: 704 },
                { at: 722, text: "0.00" },
                { at: 741 },
                { at: 759, text: "-50.00" },
              ]}
            />
          </section>

          <section className="flex min-h-0 flex-[154_1_0px] border-b border-[#b00000]">
            <div className="flex min-w-0 flex-1 flex-col">
              <Readout title="KJJ(21,5,3,0)" fields={kjjFields} />
              <div className="relative min-h-0 flex-1">
                <KjjChart />
              </div>
            </div>
            <ValueAxis
              boxed
              from={802}
              to={952}
              marks={[
                { at: 819, text: "100.00" },
                { at: 845, text: "80.00" },
                { at: 885, text: "50.00" },
                { at: 925, text: "20.00" },
              ]}
            />
          </section>

          <TimeAxis />
          <TemplateBar />
        </main>
        <QuotePanel />
        <div className="w-[5px] shrink-0 border-l border-[#a0a0a0] bg-[#f0f0f0]" />
      </div>
    </div>
  );
}
